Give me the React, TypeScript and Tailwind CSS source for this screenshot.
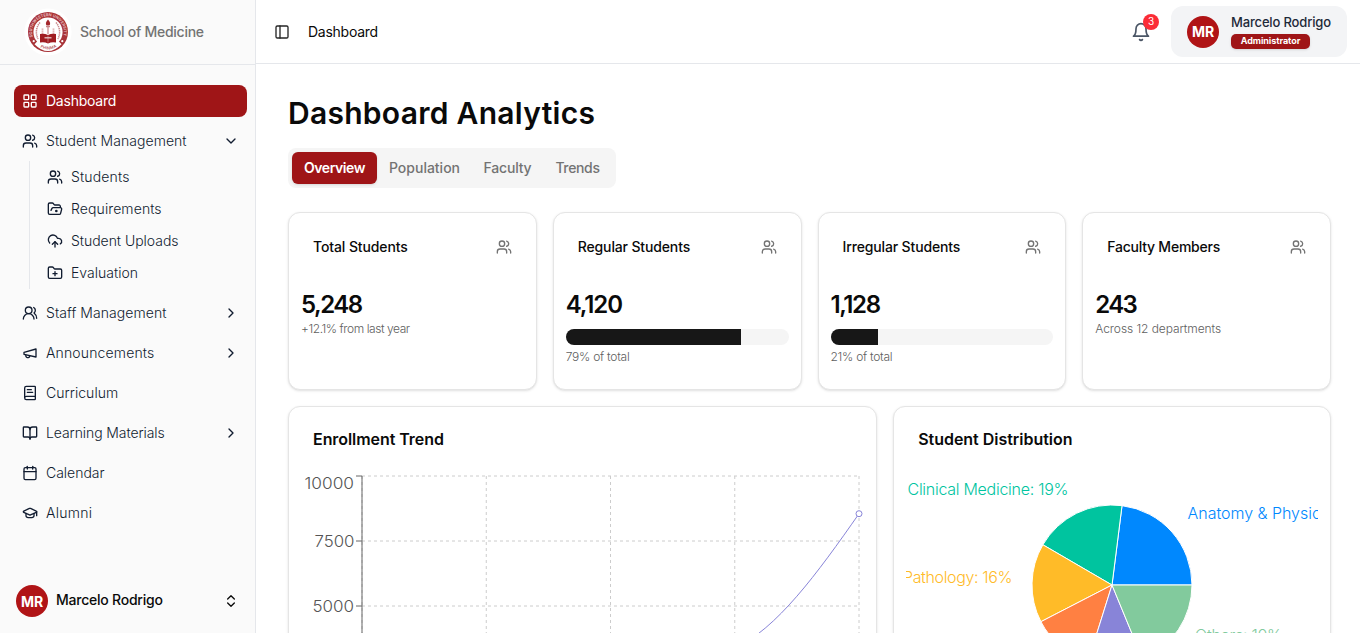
import type { ReactNode } from "react";
import {
  BookOpen,
  BookText,
  Calendar,
  ChevronDown,
  ChevronRight,
  ChevronsUpDown,
  CloudUpload,
  FolderOpenDot,
  FolderPlus,
  GraduationCap,
  LayoutGrid,
  PanelLeft,
  Users,
  UsersRound,
} from "lucide-react";

function MegaphoneIcon() {
  return (
    <svg className="size-4 shrink-0" viewBox="0 0 24 24" fill="none" stroke="currentColor" strokeWidth="2" strokeLinecap="round" strokeLinejoin="round">
      <path d="m3 11 18-5v12L3 14v-3z" />
      <path d="M11.6 16.8a3 3 0 1 1-5.8-1.6" />
    </svg>
  );
}

function BellIcon() {
  return (
    <svg className="size-5" viewBox="0 0 24 24" fill="none" stroke="currentColor" strokeWidth="2" strokeLinecap="round" strokeLinejoin="round">
      <path d="M6 8a6 6 0 0 1 12 0c0 7 3 9 3 9H3s3-2 3-9" />
      <path d="M10.3 21a1.94 1.94 0 0 0 3.4 0" />
    </svg>
  );
}

function Seal() {
  return (
    <svg className="size-12 shrink-0" viewBox="0 0 48 48">
      <defs>
        <path id="sealTop" d="M9.2 29.9 A15.9 15.9 0 1 1 38.8 29.9" />
        <path id="sealBottom" d="M14.5 38.6 A17.8 17.8 0 0 0 33.5 38.6" />
      </defs>
      <circle cx="24" cy="24" r="23.6" fill="#fff" />
      <circle cx="24" cy="24" r="20" fill="#a93439" />
      <circle cx="24" cy="24" r="14.6" fill="#fff" />
      <path d="M10.5 36.2 L14.5 32 Q24 39 33.5 32 L37.5 36.2 Q31 43 24 43 Q17 43 10.5 36.2Z" fill="#fff" />
      <circle cx="9.7" cy="33.2" r="1.1" fill="#fff" />
      <circle cx="38.3" cy="33.2" r="1.1" fill="#fff" />
      <text className="font-[Inter] text-[4px] font-bold" fill="#e6bcbe">
        <textPath href="#sealTop" textLength="58" lengthAdjust="spacingAndGlyphs" startOffset="1">SOUTHWESTERN UNIVERSITY</textPath>
      </text>
      <text className="font-[Inter] text-[4px] font-semibold" fill="#b45a5e">
        <textPath href="#sealBottom" textLength="17" startOffset="2">PHINMA</textPath>
      </text>
      <path d="M16 14.5 Q10 22 14 31 M32 14.5 Q38 22 34 31" fill="none" stroke="#c98487" strokeWidth="1.5" strokeDasharray="1.4 .7" />
      <path d="M24 11.4 Q27.4 15 25.4 17.6 H22.6 Q20.6 15 24 11.4Z" fill="#a3272c" />
      <path d="M22 18.6 H26 M24 19 V26" stroke="#c98487" strokeWidth="1.2" />
      <path d="M18.5 20.5 V26 M29.5 20.5 V26" stroke="#d9a5a7" strokeWidth="1.8" strokeDasharray="1.2 .8" />
      <path d="M16 26 Q20 25 24 27 Q28 25 32 26 V34.6 Q28 33.6 24 35.4 Q20 33.6 16 34.6Z" fill="#a01c21" />
      <path d="M24 27.5 V34.5" stroke="#cf9092" strokeWidth=".7" />
      <path d="M20.5 29.8 H27.5" stroke="#e8c8c9" strokeWidth="1.3" />
    </svg>
  );
}

function Avatar() {
  return (
    <div className="flex size-8 shrink-0 items-center justify-center rounded-full bg-[#b01416] text-[14px] font-bold text-white">
      <span className="tracking-[-0.2px]">MR</span>
    </div>
  );
}

const icon = "size-4 shrink-0";

type ItemProps = { icon: ReactNode; label: string; track: string; end?: ReactNode; active?: boolean };

function Item({ icon: glyph, label, track, end, active }: ItemProps) {
  return (
    <div
      className={
        active
          ? "flex h-8 items-center gap-2 rounded-lg bg-[#9f1517] px-2 text-sm text-white"
          : "flex h-8 items-center gap-2 rounded-lg px-2 text-sm font-light text-[#111c30]"
      }
    >
      {glyph}
      <span className={"flex-1 whitespace-nowrap " + track}>{label}</span>
      {end}
    </div>
  );
}

function SubItem({ icon: glyph, label, track }: ItemProps) {
  return (
    <div className="flex h-8 items-center gap-2 pl-[17px] text-sm font-light text-[#111c30]">
      {glyph}
      <span className={"whitespace-nowrap " + track}>{label}</span>
    </div>
  );
}

function Sidebar() {
  const right = <ChevronRight className={icon} />;
  return (
    <aside className="flex w-64 shrink-0 flex-col border-r border-gray-200 bg-[#fafafa]">
      <div className="flex h-[65px] items-center gap-2 border-b border-gray-200 pl-6">
        <Seal />
        <span className="text-sm font-medium tracking-[-0.27px] text-[#737373]">School of Medicine</span>
      </div>
      <nav className="flex flex-1 flex-col gap-2 pt-5 pr-2 pl-3.5">
        <Item active icon={<LayoutGrid className={icon} />} label="Dashboard" track="tracking-[-0.24px]" />
        <div className="flex flex-col gap-1">
          <Item icon={<Users className={icon} />} label="Student Management" track="tracking-[0.05px]" end={<ChevronDown className={icon} />} />
          <div className="ml-[15px] flex flex-col border-l border-gray-200">
            <SubItem icon={<Users className={icon} />} label="Students" track="tracking-[0.16px]" />
            <SubItem icon={<FolderOpenDot className={icon} />} label="Requirements" track="tracking-[0.1px]" />
            <SubItem icon={<CloudUpload className={icon} />} label="Student Uploads" track="tracking-[-0.03px]" />
            <SubItem icon={<FolderPlus className={icon} />} label="Evaluation" track="tracking-[0.02px]" />
          </div>
        </div>
        <Item icon={<UsersRound className={icon} />} label="Staff Management" track="tracking-[0.06px]" end={right} />
        <Item icon={<MegaphoneIcon />} label="Announcements" track="tracking-[0.15px]" end={right} />
        <Item icon={<BookText className={icon} />} label="Curriculum" track="tracking-[0.04px]" />
        <Item icon={<BookOpen className={icon} />} label="Learning Materials" track="tracking-[-0.09px]" end={right} />
        <Item icon={<Calendar className={icon} />} label="Calendar" track="tracking-[-0.02px]" />
        <Item icon={<GraduationCap className={icon} />} label="Alumni" track="tracking-[0.26px]" />
      </nav>
      <div className="flex h-16 items-center gap-2 pr-4 pl-4 text-neutral-950">
        <Avatar />
        <span className="flex-1 pb-0.5 text-sm font-medium tracking-[-0.23px]">Marcelo Rodrigo</span>
        <ChevronsUpDown className={icon} />
      </div>
    </aside>
  );
}

function TopBar() {
  return (
    <header className="flex h-16 shrink-0 items-center border-b border-gray-200 pr-[13px] pl-[18px]">
      <PanelLeft className="size-4 text-neutral-800" />
      <span className="ml-[18px] flex-1 text-sm tracking-[-0.26px] text-neutral-950">Dashboard</span>
      <div className="relative text-[#4a5565]">
        <BellIcon />
        <span className="absolute -top-2 -right-2 flex size-4 items-center justify-center rounded-full bg-[#fb2c36] text-[10px] text-white">3</span>
      </div>
      <div className="ml-5 flex h-[51px] w-44 items-center gap-3 rounded-xl bg-[#f3f4f6] px-4">
        <Avatar />
        <div className="flex flex-col items-start pb-0.5">
          <span className="text-[13px] leading-[18px] font-medium tracking-[-0.16px] whitespace-nowrap text-[#1e2939]">Marcelo Rodrigo</span>
          <span className="mt-[3px] flex h-[15px] w-[79px] items-center justify-center rounded-[5px] bg-[#9f1517] text-[9px] font-bold tracking-[-0.07px] text-white shadow">Administrator</span>
        </div>
      </div>
    </header>
  );
}

const card = "rounded-xl border border-[#e5e5e5] bg-white shadow-sm";

type StatProps = { title: string; titleTrack: string; value: string; valueTrack: string; note: string; noteTrack: string; percent?: number };

function Stat({ title, titleTrack, value, valueTrack, note, noteTrack, percent }: StatProps) {
  return (
    <div className={card + " flex h-[178px] flex-col"}>
      <div className="flex items-center justify-between px-6 pt-6">
        <span className={"text-sm font-medium whitespace-nowrap " + titleTrack}>{title}</span>
        <Users className="size-4 text-[#737373]" />
      </div>
      <div className="px-3 pt-8">
        <div className={"text-2xl font-semibold " + valueTrack}>{value}</div>
        {percent !== undefined && (
          <div className="mt-2 mb-1 h-4 overflow-hidden rounded-full bg-[#f5f5f5]">
            <div className="h-full bg-[#171717]" style={{ width: `${percent}%` }} />
          </div>
        )}
        <p className={"text-xs font-light whitespace-nowrap text-[#606060] " + noteTrack}>{note}</p>
      </div>
    </div>
  );
}

function TrendChart() {
  const xs = [61, 185.25, 309.5, 433.75, 558];
  const ticks = [
    { y: 5, textY: 18, x: 3.5, w: 49.5, label: "10000" },
    { y: 70, textY: 76, x: 13.5, w: 40, label: "7500" },
    { y: 135, textY: 141, x: 11.5, w: 41.5, label: "5000" },
  ];
  return (
    <svg className="block h-[300px] w-[563px]" viewBox="0 0 563 300">
      <g stroke="#ccc" strokeDasharray="3 3">
        {ticks.map((t) => <line key={t.y} x1="61" y1={t.y} x2="558" y2={t.y} />)}
        {xs.map((x) => <line key={x} x1={x} y1="5" x2={x} y2="265" />)}
      </g>
      <g stroke="#666">
        <line x1="61" y1="5" x2="61" y2="265" />
        {ticks.map((t) => <line key={t.y} x1="55" y1={t.y} x2="61" y2={t.y} />)}
      </g>
      <g className="font-[Inter] text-base font-light" fill="#555">
        {ticks.map((t) => <text key={t.label} x={t.x} y={t.textY} textLength={t.w} lengthAdjust="spacingAndGlyphs">{t.label}</text>)}
      </g>
      <path d="M61 225C102.4 219 143.8 213 185.25 208C226.7 203 268 201 309.5 195C351 189 392.3 188 433.75 177C475.2 158.6 516.6 102.1 558 42.7" fill="none" stroke="#8884d8" />
      <circle cx="558" cy="42.7" r="3" fill="#fff" stroke="#8884d8" />
    </svg>
  );
}

const slices = [
  { from: 0, to: 82.8, color: "#0088FE" },
  { from: 82.8, to: 149.8, color: "#00C49F" },
  { from: 149.8, to: 207.3, color: "#FFBB28" },
  { from: 207.3, to: 252.6, color: "#FF8042" },
  { from: 252.6, to: 292.4, color: "#8884d8" },
  { from: 292.4, to: 360, color: "#82ca9d" },
];

function point(angle: number) {
  const a = (angle * Math.PI) / 180;
  return `${206 + 80 * Math.cos(a)} ${114 - 80 * Math.sin(a)}`;
}

function DistributionChart() {
  return (
    <svg className="block h-[300px] w-[412px] overflow-hidden" viewBox="0 0 412 300">
      {slices.map((s) => (
        <path key={s.color} d={`M206 114L${point(s.from)}A80 80 0 0 0 ${point(s.to)}Z`} fill={s.color} stroke="#fff" />
      ))}
      <g className="font-[Inter] text-base font-light">
        <text x="1.5" y="24" textLength="161" fill="#00C49F">Clinical Medicine: 19%</text>
        <text x="281.5" y="48" textLength="209" fill="#0088FE">Anatomy &amp; Physiology: 23%</text>
        <text x="-3" y="112" textLength="109.5" fill="#FFBB28">Pathology: 16%</text>
        <text x="289" y="170" textLength="87" fill="#82ca9d">Others: 19%</text>
      </g>
    </svg>
  );
}

export default function App() {
  return (
    <div className="flex h-[633px] w-full overflow-hidden bg-white font-['Inter','Liberation_Sans',sans-serif] text-neutral-950">
      <Sidebar />
      <div className="flex min-w-0 flex-1 flex-col overflow-hidden">
        <TopBar />
        <main className="flex flex-1 flex-col overflow-hidden pt-[31px] pr-[29px] pl-8">
          <h1 className="text-3xl font-semibold tracking-[0.28px]">Dashboard Analytics</h1>
          <div className="mt-[17px] flex h-10 w-fit shrink-0 items-center rounded-lg bg-[#f5f5f5] p-1 text-sm font-medium text-[#737373]">
            <span className="flex h-8 w-[85px] items-center justify-center rounded-md bg-[#9f1517] font-semibold tracking-[-0.42px] text-white shadow-sm">Overview</span>
            <span className="w-[95px] text-center">Population</span>
            <span className="w-[71px] text-center tracking-[-0.21px]">Faculty</span>
            <span className="w-[69px] text-center tracking-[-0.35px]">Trends</span>
          </div>
          <div className="mt-6 grid shrink-0 grid-cols-4 gap-4">
            <Stat title="Total Students" titleTrack="tracking-[-0.11px]" value="5,248" valueTrack="tracking-[-1.5px]" note="+12.1% from last year" noteTrack="tracking-[-0.43px]" />
            <Stat title="Regular Students" titleTrack="tracking-[-0.14px]" value="4,120" valueTrack="tracking-[-1.1px]" note="79% of total" noteTrack="tracking-[-0.25px]" percent={78.6} />
            <Stat title="Irregular Students" titleTrack="tracking-[-0.14px]" value="1,128" valueTrack="tracking-[-1.4px]" note="21% of total" noteTrack="tracking-[-0.27px]" percent={21.4} />
            <Stat title="Faculty Members" titleTrack="tracking-[-0.23px]" value="243" valueTrack="tracking-[-1.6px]" note="Across 12 departments" noteTrack="tracking-[-0.08px]" />
          </div>
          <div className="mt-4 grid shrink-0 grid-cols-7 gap-4">
            <section className={card + " col-span-4 h-[400px] px-3"}>
              <h2 className="px-3 pt-6 text-base leading-4 font-semibold tracking-[-0.06px]">Enrollment Trend</h2>
              <div className="pt-6">
                <TrendChart />
              </div>
            </section>
            <section className={card + " col-span-3 h-[400px] px-3"}>
              <h2 className="px-3 pt-6 text-base leading-4 font-semibold tracking-[-0.02px]">Student Distribution</h2>
              <div className="pt-6">
                <DistributionChart />
              </div>
            </section>
          </div>
        </main>
      </div>
    </div>
  );
}
